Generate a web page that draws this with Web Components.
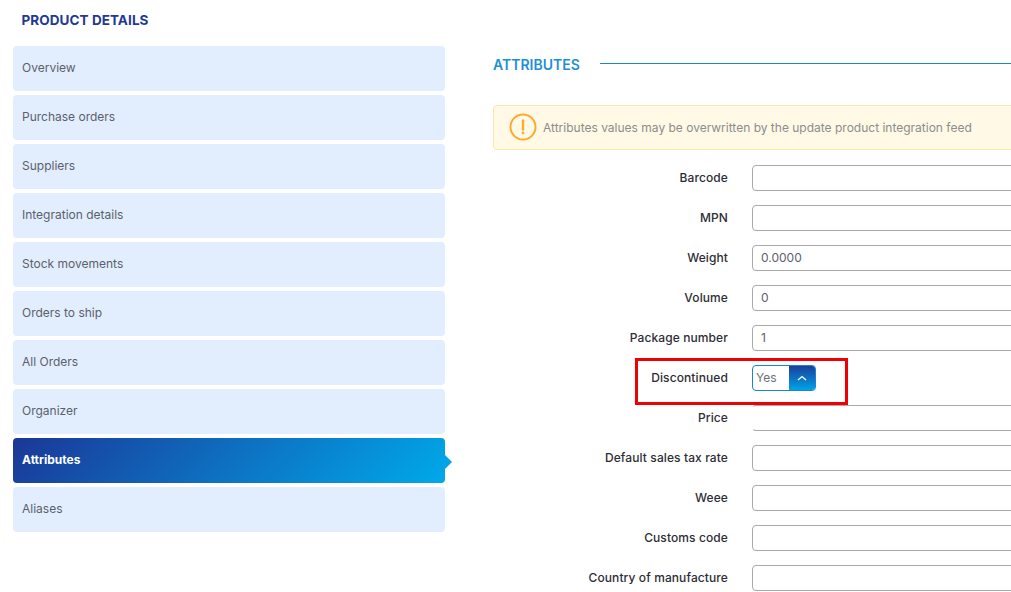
<!DOCTYPE html>
<html>
<head>
<meta charset="utf-8">
<title>Product details</title>
<style>
html, body { margin: 0; height: 100%; overflow: hidden; background: #fff; }
body { font-family: "Inter", "Liberation Sans", sans-serif; }
</style>
</head>
<body>
<product-page>
  <side-menu slot="side" heading="PRODUCT DETAILS">
    <menu-item>Overview</menu-item>
    <menu-item>Purchase orders</menu-item>
    <menu-item>Suppliers</menu-item>
    <menu-item>Integration details</menu-item>
    <menu-item>Stock movements</menu-item>
    <menu-item>Orders to ship</menu-item>
    <menu-item>All Orders</menu-item>
    <menu-item>Organizer</menu-item>
    <menu-item active>Attributes</menu-item>
    <menu-item>Aliases</menu-item>
  </side-menu>
  <section-title>ATTRIBUTES</section-title>
  <warn-note>Attributes values may be overwritten by the update product integration feed</warn-note>
  <form-row label="Barcode"><text-field></text-field></form-row>
  <form-row label="MPN"><text-field></text-field></form-row>
  <form-row label="Weight"><text-field value="0.0000"></text-field></form-row>
  <form-row label="Volume"><text-field value="0"></text-field></form-row>
  <form-row label="Package number"><text-field value="1"></text-field></form-row>
  <form-row label="Discontinued" marked><yes-select value="Yes"></yes-select></form-row>
  <form-row label="Price"><text-field open-left></text-field></form-row>
  <form-row label="Default sales tax rate"><text-field></text-field></form-row>
  <form-row label="Weee"><text-field></text-field></form-row>
  <form-row label="Customs code"><text-field></text-field></form-row>
  <form-row label="Country of manufacture"><text-field></text-field></form-row>
</product-page>

<script>
const FONT = '"Inter", "Liberation Sans", sans-serif';

class ProductPage extends HTMLElement {
  constructor() {
    super();
    this.attachShadow({ mode: 'open' });
    this.shadowRoot.innerHTML = `
<style>
:host { display: grid; grid-template-columns: 432px 1fr; column-gap: 48px; padding: 0 0 0 13px; width: 1053px; font-family: ${FONT}; }
.main { padding-top: 55px; }
</style>
<div><slot name="side"></slot></div>
<div class="main"><slot></slot></div>`;
  }
}

class SideMenu extends HTMLElement {
  constructor() {
    super();
    this.attachShadow({ mode: 'open' });
    this.shadowRoot.innerHTML = `
<style>
:host { display: block; }
h2 { margin: 0; padding: 12px 0 0 8.5px; height: 46px; box-sizing: border-box; font-size: 13.5px; line-height: 16px; font-weight: 700; letter-spacing: 0.07px; color: #1f3a93; }
.list { display: flex; flex-direction: column; gap: 4px; }
</style>
<h2></h2>
<div class="list"><slot></slot></div>`;
    this.shadowRoot.querySelector('h2').textContent = this.getAttribute('heading');
  }
}

class MenuItem extends HTMLElement {
  constructor() {
    super();
    this.attachShadow({ mode: 'open' });
    this.shadowRoot.innerHTML = `
<style>
:host { display: flex; align-items: center; position: relative; height: 45px; padding: 0 0 3px 9px; box-sizing: border-box; border-radius: 4px; background: #e2eefe; color: #5b5f6b; font-size: 12px; }
:host([active]) { background: linear-gradient(135deg, #1b3797 0%, #00a9ea 100%) ; color: #fff; font-weight: 700; }
:host([active])::after { content: ""; position: absolute; right: -7px; top: 17px; border-left: 7px solid #02a4e6; border-top: 7px solid transparent; border-bottom: 7px solid transparent; }
</style>
<slot></slot>`;
  }
}

class SectionTitle extends HTMLElement {
  constructor() {
    super();
    this.attachShadow({ mode: 'open' });
    this.shadowRoot.innerHTML = `
<style>
:host { display: flex; align-items: center; gap: 20px; height: 18px; color: #1e8fd6; font-size: 14px; font-weight: 600; }
.line { flex: 1; height: 1px; background: #1a86cc; margin-top: -1px; }
</style>
<slot></slot><span class="line"></span>`;
  }
}

class WarnNote extends HTMLElement {
  constructor() {
    super();
    this.attachShadow({ mode: 'open' });
    this.shadowRoot.innerHTML = `
<style>
:host { display: flex; align-items: center; gap: 6px; box-sizing: border-box; height: 45px; margin: 32px 0 15px; padding-left: 15px; background: #fff9e6; border: 1px solid #fbe9a9; border-radius: 4px; color: #8d8d8d; font-size: 12px; }
svg { width: 28px; height: 28px; flex: none; margin-top: -1px; }
span { margin-top: -1px; }
</style>
<svg viewBox="0 0 28 28"><circle cx="14" cy="14" r="12.5" fill="none" stroke="#fbab2e" stroke-width="2"/><path d="M14 7.5v9" stroke="#fbab2e" stroke-width="2.4" stroke-linecap="round"/><circle cx="14" cy="20" r="1.4" fill="#fbab2e"/></svg>
<span><slot></slot></span>`;
  }
}

class FormRow extends HTMLElement {
  constructor() {
    super();
    this.attachShadow({ mode: 'open' });
    this.shadowRoot.innerHTML = `
<style>
:host { display: grid; grid-template-columns: 235px 1fr; column-gap: 24px; align-items: center; height: 26px; margin-bottom: 14px; position: relative; }
label { text-align: right; font-size: 12px; font-weight: 500; letter-spacing: 0.1px; color: #2d2d35; white-space: nowrap; padding-bottom: 2px; }
.mark { display: none; position: absolute; left: 142px; top: -7px; width: 213px; height: 47px; box-sizing: border-box; border: 3px solid #f00005; z-index: 2; }
:host([marked]) .mark { display: block; }
</style>
<label></label><div><slot></slot></div><span class="mark"></span>`;
    this.shadowRoot.querySelector('label').textContent = this.getAttribute('label');
  }
}

class TextField extends HTMLElement {
  constructor() {
    super();
    this.attachShadow({ mode: 'open' });
    this.shadowRoot.innerHTML = `
<style>
:host { display: flex; align-items: center; box-sizing: border-box; height: 26px; padding: 0 0 2px 8px; border: 1px solid #a9a9a9; border-radius: 4px; background: #fff; color: #5b5f6b; font-size: 12px; }
:host([open-left]) { border-left-color: transparent; }
</style>
<span></span>`;
    this.shadowRoot.querySelector('span').textContent = this.getAttribute('value') || '';
  }
}

class YesSelect extends HTMLElement {
  constructor() {
    super();
    this.attachShadow({ mode: 'open' });
    this.shadowRoot.innerHTML = `
<style>
:host { display: flex; box-sizing: border-box; width: 64px; height: 26px; border: 1px solid #1685d8; border-radius: 4px; overflow: hidden; background: #fff; color: #6b6f7a; font-size: 12px; }
.val { flex: 1; display: flex; align-items: center; padding: 0 0 1px 3px; }
.btn { flex: none; width: 26px; display: flex; align-items: center; justify-content: center; background: linear-gradient(180deg, #1b3f9c, #00a3e6); }
svg { width: 10px; height: 6px; }
</style>
<span class="val"></span>
<span class="btn"><svg viewBox="0 0 10 6"><path d="M1 5L5 1.5 9 5" fill="none" stroke="#fff" stroke-width="1.3"/></svg></span>`;
    this.shadowRoot.querySelector('.val').textContent = this.getAttribute('value');
  }
}

customElements.define('product-page', ProductPage);
customElements.define('side-menu', SideMenu);
customElements.define('menu-item', MenuItem);
customElements.define('section-title', SectionTitle);
customElements.define('warn-note', WarnNote);
customElements.define('form-row', FormRow);
customElements.define('text-field', TextField);
customElements.define('yes-select', YesSelect);
</script>
</body>
</html>
